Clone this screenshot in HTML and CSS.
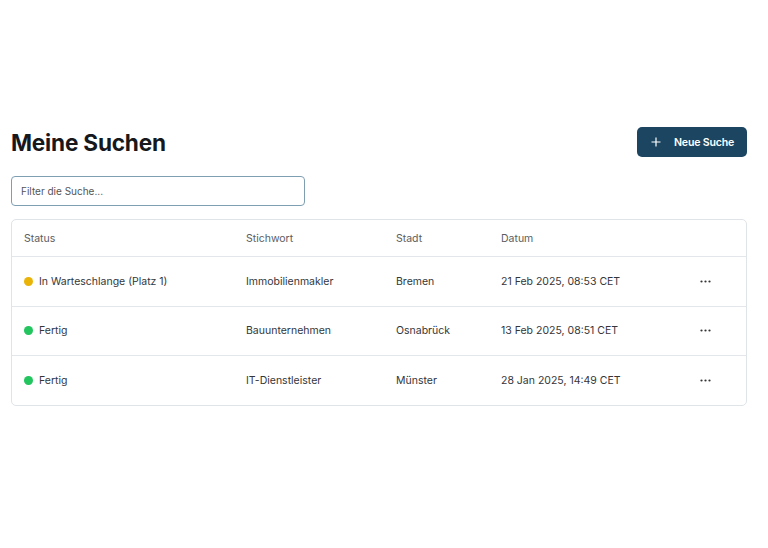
FILE: index.html
```html
<!DOCTYPE html>
<html lang="de">
<head>
<meta charset="utf-8">
<title>Meine Suchen</title>
<link rel="stylesheet" href="styles.css">
</head>
<body>
<main class="page">
  <div class="head">
    <h1 class="title">Meine Suchen</h1>
    <button class="btn-new" type="button">
      <svg class="plus" width="10" height="10" viewBox="0 0 10 10"><path d="M5 0.5V9.5M0.5 5H9.5" stroke="#fff" stroke-width="1.2" fill="none"/></svg>
      <span>Neue Suche</span>
    </button>
  </div>
  <input class="filter" type="text" placeholder="Filter die Suche...">
  <div class="table">
    <div class="row row-head">
      <div>Status</div><div>Stichwort</div><div>Stadt</div><div>Datum</div><div></div>
    </div>
    <div class="row">
      <div class="status"><span class="dot dot-queue"></span>In Warteschlange (Platz 1)</div>
      <div>Immobilienmakler</div><div>Bremen</div><div>21 Feb 2025, 08:53 CET</div>
      <div class="more"><svg width="11" height="3" viewBox="0 0 11 3"><circle cx="1.5" cy="1.5" r="1.1"/><circle cx="5.5" cy="1.5" r="1.1"/><circle cx="9.5" cy="1.5" r="1.1"/></svg></div>
    </div>
    <div class="row">
      <div class="status"><span class="dot dot-done"></span>Fertig</div>
      <div>Bauunternehmen</div><div>Osnabrück</div><div>13 Feb 2025, 08:51 CET</div>
      <div class="more"><svg width="11" height="3" viewBox="0 0 11 3"><circle cx="1.5" cy="1.5" r="1.1"/><circle cx="5.5" cy="1.5" r="1.1"/><circle cx="9.5" cy="1.5" r="1.1"/></svg></div>
    </div>
    <div class="row">
      <div class="status"><span class="dot dot-done"></span>Fertig</div>
      <div>IT-Dienstleister</div><div>Münster</div><div>28 Jan 2025, 14:49 CET</div>
      <div class="more"><svg width="11" height="3" viewBox="0 0 11 3"><circle cx="1.5" cy="1.5" r="1.1"/><circle cx="5.5" cy="1.5" r="1.1"/><circle cx="9.5" cy="1.5" r="1.1"/></svg></div>
    </div>
  </div>
</main>
</body>
</html>
```
FILE: styles.css
```css
html, body {
  margin: 0;
  padding: 0;
  background: #ffffff;
}
body {
  font-family: Inter, "Noto Sans", sans-serif;
  color: #222;
}
.page {
  padding: 127px 21px 0 11px;
  display: flex;
  flex-direction: column;
}
.head {
  display: flex;
  justify-content: space-between;
  align-items: center;
  height: 30px;
}
.title {
  margin: 0;
  font-size: 22.6px;
  font-weight: 700;
  color: #16181c;
  letter-spacing: -0.2px;
}
.btn-new {
  display: flex;
  align-items: center;
  gap: 13px;
  height: 30px;
  width: 110px;
  padding: 0 0 0 14px;
  border: none;
  border-radius: 5px;
  background: #1b4560;
  color: #fff;
  font-family: Inter, sans-serif;
  font-size: 10.6px;
  font-weight: 600;
  letter-spacing: -0.2px;
}
.filter {
  margin-top: 19px;
  width: 294px;
  height: 30px;
  box-sizing: border-box;
  border: 1px solid #7e9fb2;
  border-radius: 4px;
  padding: 0 9px;
  font-family: Inter, sans-serif;
  font-size: 10px;
  color: #333;
  outline: none;
}
.filter::placeholder {
  color: #555;
}
.table {
  margin-top: 13px;
  border: 1px solid #dfe4e8;
  border-radius: 5px;
  display: flex;
  flex-direction: column;
}
.row {
  display: grid;
  grid-template-columns: 222px 150px 105px 199px 1fr;
  align-items: center;
  padding: 0 12px;
  height: 48.6px;
  border-top: 1px solid #e3e7eb;
  font-size: 10.5px;
  color: #34363a;
}
.row-head {
  height: 36px;
  border-top: none;
  color: #5a5d62;
}
.status {
  display: flex;
  align-items: center;
  gap: 6px;
}
.dot {
  width: 9px;
  height: 9px;
  border-radius: 50%;
  display: inline-block;
}
.dot-queue { background: #eab308; }
.dot-done { background: #22c55e; }
.more {
  display: flex;
  align-items: center;
}
.more svg { fill: #333; }
```
